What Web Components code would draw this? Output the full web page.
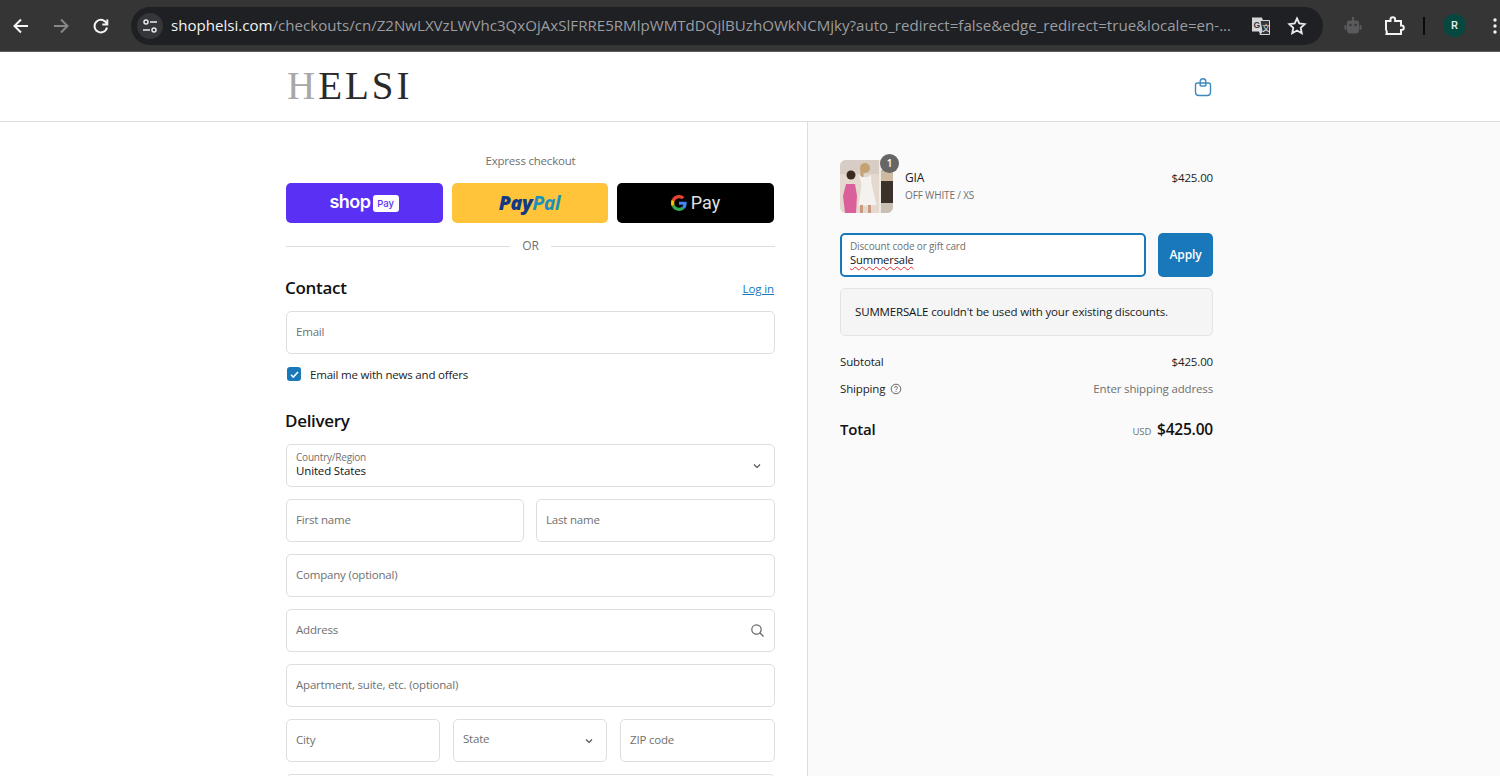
<!DOCTYPE html>
<html><head><meta charset="utf-8">
<style>
html,body{margin:0;height:776px;overflow:hidden;background:#fff;font-family:"Open Sans","Noto Sans","Liberation Sans",sans-serif;}
</style></head><body>
<browser-bar></browser-bar>
<shop-header></shop-header>
<checkout-page>
  <div slot="main" style="display:contents">
    <express-checkout></express-checkout>
    <section-head title="Contact" link="Log in" top="21"></section-head>
    <form-field label="Email"></form-field>
    <check-row>Email me with news and offers</check-row>
    <section-head title="Delivery" top="27"></section-head>
    <div style="display:flex;flex-direction:column;gap:12px">
      <form-field label="Country/Region" value="United States" icon="chevron"></form-field>
      <field-row><form-field label="First name"></form-field><form-field label="Last name"></form-field></field-row>
      <form-field label="Company (optional)"></form-field>
      <form-field label="Address" icon="search"></form-field>
      <form-field label="Apartment, suite, etc. (optional)"></form-field>
      <field-row three><form-field label="City"></form-field><form-field label="State" icon="chevron" small></form-field><form-field label="ZIP code"></form-field></field-row>
      <form-field label=""></form-field>
    </div>
  </div>
  <order-summary slot="side"></order-summary>
</checkout-page>
<script>
function def(name, html){
  customElements.define(name, class extends HTMLElement{
    connectedCallback(){
      if(this.shadowRoot) return;
      const r=this.attachShadow({mode:'open'});
      r.innerHTML = typeof html==='function'?html(this):html;
    }
  });
}
def('browser-bar',`<style>
:host{display:flex;align-items:center;height:51px;background:#353535;border-bottom:1px solid #5c5c5c;box-sizing:content-box;font-family:"Open Sans",sans-serif;overflow:hidden}
.nav{display:flex;align-items:center;gap:20px;padding-left:11px;width:131px;box-sizing:border-box;flex:none}
svg{display:block;flex:none}
.pill{flex:none;width:1192px;height:38px;background:#1f2023;border-radius:19px;display:flex;align-items:center;box-sizing:border-box;padding-left:6px}
.tune{width:26px;height:26px;border-radius:50%;background:#35363a;display:flex;align-items:center;justify-content:center;flex:none}
.url{margin-left:8px;width:1062px;flex:none;font-size:15.100px;line-height:22px;padding-bottom:2px;color:#9b9da1;white-space:nowrap;overflow:hidden}
.url b{font-weight:400;color:#f1f3f4}
.right{display:flex;align-items:center;flex:1}
</style>
<div class="nav">
<svg width="20" height="20" viewBox="0 0 20 20" fill="none" stroke="#f1f3f4" stroke-width="2"><path d="M17 10H4M10 3.5 3.500 10l6.500 6.500"/></svg>
<svg width="20" height="20" viewBox="0 0 20 20" fill="none" stroke="#85878a" stroke-width="2"><path d="M3 10h13M10 3.500l6.500 6.500-6.500 6.500"/></svg>
<svg width="20" height="20" viewBox="0 0 20 20" fill="none" stroke="#f1f3f4" stroke-width="2"><path d="M15.800 8A6.300 6.300 0 1 0 16 11.500"/><path d="M16.300 3.500v5h-5" /></svg>
</div>
<div class="pill">
<div class="tune"><svg width="18" height="18" viewBox="0 0 18 18" fill="none" stroke="#e8eaed" stroke-width="1.500"><circle cx="5" cy="5" r="2"/><path d="M9 5h7M2 13h7"/><circle cx="13" cy="13" r="2"/></svg></div>
<div class="url"><b>shophelsi.com</b>/checkouts/cn/Z2NwLXVzLWVhc3QxOjAxSlFRRE5RMlpWMTdDQjlBUzhOWkNCMjky?auto_redirect=false&amp;edge_redirect=true&amp;locale=en-...</div>
<svg style="margin-left:18px" width="20" height="20" viewBox="0 0 20 20"><path d="M1 1.500h10l1 3h6.500v14H9l-1-3H1z" fill="#d4d5d7"/><path d="M9 4.500h9.500v14H9l2-3z" fill="#35363a" stroke="#d4d5d7"/><text x="2.500" y="11.500" font-size="8.500" font-weight="700" font-family="Liberation Sans" fill="#35363a">G</text><text x="11" y="15" font-size="8" font-family="Noto Sans CJK SC" fill="#e8eaed">文</text></svg>
<svg style="margin-left:16px" width="20" height="20" viewBox="0 0 20 20" fill="none" stroke="#e8eaed" stroke-width="1.800"><path d="m10 2.500 2.300 5 5.400.6-4 3.700 1.100 5.400L10 14.500l-4.800 2.700 1.100-5.400-4-3.700 5.400-.6z"/></svg>
</div>
<div class="right">
<svg style="margin-left:19px" width="22" height="22" viewBox="0 0 22 22" fill="#5a5a5c"><rect x="10" y="2" width="2" height="4"/><path d="M5 7.500q0-2 2-2h8q2 0 2 2v8q0 3-3 3H8q-3 0-3-3z"/><rect x="2.500" y="10" width="2" height="5" rx="1"/><rect x="17.500" y="10" width="2" height="5" rx="1"/><circle cx="8.500" cy="10" r="1.200" fill="#353535"/><circle cx="13.500" cy="10" r="1.200" fill="#353535"/></svg>
<svg style="margin-left:19px" width="22" height="22" viewBox="0 0 22 22" fill="none" stroke="#f1f3f4" stroke-width="2"><path d="M3 6h4.500V4.500a2.300 2.300 0 0 1 4.600 0V6H18v4.500h.5a2.300 2.300 0 0 1 0 4.600H18V19H3.500q.8-2.500-.5-4.500z"/></svg>
<div style="width:2px;height:18px;background:#0a0a0a;margin-left:18px;flex:none"></div>
<div style="margin-left:18px;width:23px;height:23px;border-radius:50%;background:#06483f;color:#e8f0ee;font:500 11px/23px Roboto,sans-serif;text-align:center;flex:none">R</div>
<svg style="margin-left:26px" width="6" height="18" viewBox="0 0 6 18" fill="#f1f3f4"><circle cx="3" cy="3" r="1.700"/><circle cx="3" cy="9" r="1.700"/><circle cx="3" cy="15" r="1.700"/></svg>
</div>`);
def('shop-header',`<style>
:host{display:block;background:#fff;border-bottom:1px solid #dedede;box-sizing:border-box;height:70px}
.in{width:927px;margin-left:286px;height:69px;display:flex;align-items:center;justify-content:space-between}
.logo{font:400 39px/1 "Liberation Serif",serif;letter-spacing:3px;color:#2a2a2a;margin:-2px 0 0 1px}
.logo span{color:#a8a8a8}
svg{display:block}
</style><div class="in"><div class="logo"><span>H</span>ELSI</div>
<svg width="20" height="20" viewBox="0 0 20 20" fill="none" stroke="#3f88bd" stroke-width="1.400"><path d="M4.500 6h11q2 0 2 2v7q0 3.500-3.500 3.500H6Q2.500 18.500 2.500 15V8q0-2 2-2z"/><path d="M7.200 8.500V4.500a2.800 2.800 0 0 1 5.600 0v4q-2.800 1.200-5.600 0z"/></svg></div>`);
def('checkout-page',`<style>
:host{display:grid;grid-template-columns:807px 1fr;height:654px;overflow:hidden}
.main{padding:31px 32px 0 286px;box-sizing:border-box;background:#fff;min-width:0}
.side{background:#fafafa;border-left:1px solid #dedede;padding:38px 0 0 32px;box-sizing:border-box}
</style><div class="main"><slot name="main"></slot></div><div class="side"><slot name="side"></slot></div>`);
def('express-checkout',`<style>
:host{display:block;font-size:11.500px;color:#707070}
.t{text-align:center;line-height:16px;margin-bottom:14px;letter-spacing:-.2px}
.b{display:grid;grid-template-columns:157px 156px 157px;column-gap:9px;margin-right:1px}
.pay{height:40px;border-radius:5px;display:flex;align-items:center;justify-content:center}
.shop{background:#5a31f4;color:#fff;gap:2px}
.shop i{font:600 18px/1 "Inter",sans-serif;letter-spacing:-.5px;margin:-2px 0 0 -1px}
.shop em{font:500 9.500px/17px "Inter",sans-serif;background:#fff;color:#5a31f4;border-radius:3px;width:26px;text-align:center;height:17px;display:block}
.pp{background:#ffc439;font:italic 700 19.500px/1 "Open Sans",sans-serif;letter-spacing:-.4px;padding-right:1px}
.pp b{color:#123984}.pp u{text-decoration:none;color:#1b90bf}
.g{background:#000;color:#e0e0e0;font:400 18px/1 "Roboto",sans-serif;gap:4px}
.or{display:flex;align-items:center;gap:12px;margin-top:14px;height:18px;font-size:12px;color:#707070}
.or:before,.or:after{content:"";flex:1;height:1px;background:#dedede}
.or span{line-height:18px}
svg{display:block}
</style>
<div class="t">Express checkout</div>
<div class="b">
<div class="pay shop"><i>shop</i><em>Pay</em></div>
<div class="pay pp"><b>Pay</b><u>Pal</u></div>
<div class="pay g"><svg width="16" height="16" viewBox="0 0 48 48"><path fill="#ea4335" d="M24 9.500c3.500 0 6.700 1.200 9.200 3.600l6.800-6.800C35.900 2.400 30.500 0 24 0 14.600 0 6.500 5.400 2.600 13.200l8 6.200C12.400 13.700 17.700 9.500 24 9.500z"/><path fill="#4285f4" d="M47 24.500c0-1.600-.1-3.100-.4-4.500H24v9h13c-.6 3-2.300 5.500-4.800 7.200l7.700 6C44.400 38 47 31.800 47 24.500z"/><path fill="#fbbc05" d="M10.500 28.600a14.500 14.500 0 0 1 0-9.200l-8-6.200a24 24 0 0 0 0 21.600z"/><path fill="#34a853" d="M24 48c6.500 0 11.900-2.100 15.900-5.800l-7.700-6c-2.200 1.500-4.900 2.300-8.200 2.300-6.300 0-11.600-4.200-13.500-9.900l-8 6.200C6.500 42.600 14.600 48 24 48z"/></svg><span>Pay</span></div>
</div>
<div class="or"><span>OR</span></div>`);
def('section-head',h=>`<style>
:host{display:flex;align-items:center;justify-content:space-between;margin-top:${h.getAttribute('top')||0}px;margin-bottom:11px;height:24px}
h2{margin:0 0 0 -1px;font:600 17px/24px "Open Sans",sans-serif;color:#111;letter-spacing:-.3px}
a{font-size:11.500px;color:#1878b9;text-decoration:underline;margin:1px 1px 0 0;letter-spacing:-.1px}
</style><h2>${h.getAttribute('title')}</h2>${h.getAttribute('link')?`<a>${h.getAttribute('link')}</a>`:''}`);
def('form-field',h=>{
 const v=h.getAttribute('value'),ic=h.getAttribute('icon'),sm=h.hasAttribute('small');
 const icon=ic==='chevron'?`<svg style="margin-top:${sm?5:3}px" width="12" height="12" viewBox="0 0 12 12" fill="none" stroke="#555" stroke-width="1.200"><path d="m3 4.500 3 3 3-3"/></svg>`:ic==='search'?`<svg style="margin:3px -2px 0 0" width="15" height="15" viewBox="0 0 15 15" fill="none" stroke="#666" stroke-width="1.200"><circle cx="6.500" cy="6.500" r="4.700"/><path d="m10 10 3.500 3.500"/></svg>`:'';
 return `<style>
:host{height:43px;border:1px solid #dedede;border-radius:5px;background:#fff;box-sizing:border-box;padding:0 11px ${sm?5:3}px 9px;display:flex;align-items:center;justify-content:space-between;font-size:11.500px;letter-spacing:-.2px;color:#707070;min-width:0}
.s{font-size:10px;line-height:14px}
.v{color:#111;font-size:11.500px;line-height:14px;letter-spacing:-.15px}
svg{display:block;flex:none}
</style><div>${v?`<div class="s">${h.getAttribute('label')}</div><div class="v">${v}</div>`:`<div>${h.getAttribute('label')}</div>`}</div>${icon}`;});
def('field-row',h=>`<style>:host{display:grid;grid-template-columns:${h.hasAttribute('three')?'154px 154px 155px':'238px 239px'};column-gap:${h.hasAttribute('three')?'13px':'12px'}}</style><slot></slot>`);
def('check-row',`<style>
:host{display:flex;align-items:center;gap:9px;margin:12px 0 0 1px;height:16px;font-size:11.500px;color:#222;letter-spacing:-.2px}
.c{width:14px;height:14px;background:#1878b9;border-radius:3px;display:flex;align-items:center;justify-content:center}
svg{display:block}
</style><div class="c"><svg width="11" height="11" viewBox="0 0 11 11" fill="none" stroke="#fff" stroke-width="1.500"><path d="m2 5.800 2.300 2.300L9 3"/></svg></div><div><slot></slot></div>`);
def('order-summary',`<style>
:host{display:block;width:373px;font-size:11.500px;color:#222;letter-spacing:-.15px}
.item{display:flex;height:54px}
.th{position:relative;width:53px;height:53px;flex:none;border-radius:6px;background:#e9dfd8}
.th svg{display:block;border-radius:6px;filter:blur(.4px)}
.badge{position:absolute;top:-6px;right:-6px;width:19px;height:19px;border-radius:50%;background:#666;color:#fff;font:600 10px/19px "Open Sans",sans-serif;text-align:center}
.nm{margin-left:12px;flex:1;padding-top:10px}
.nm div{line-height:16px;font-size:12px}
.nm small{display:block;font-size:10px;line-height:14px;color:#707070;margin-top:2px}
.pr{padding-top:10px;line-height:16px;font-size:11.500px}
.disc{display:flex;gap:12px;margin-top:19px;height:44px}
.inp{flex:1;border:2px solid #1878b9;border-radius:5px;background:#fff;box-sizing:border-box;padding:5px 8px}
.inp small{display:block;font-size:10px;line-height:13px;color:#707070}
.inp span{display:block;font-size:11.200px;line-height:14px;color:#111;text-decoration:underline wavy #e0342c 1px;text-underline-offset:2px}
.apply{width:55px;flex:none;background:#1878b9;border-radius:5px;color:#fff;font-weight:600;font-size:12px;display:flex;align-items:center;justify-content:center;box-sizing:border-box;padding-bottom:2px}
.msg{margin-top:11px;height:48px;border:1px solid #e3e3e3;border-radius:5px;background:#f5f5f5;box-sizing:border-box;padding:0 14px 2px;display:flex;align-items:center}
.msg b{font-weight:500;color:#111}
.row{display:flex;justify-content:space-between;align-items:center;line-height:16px}
.mut{color:#707070}
.q{display:inline-block;vertical-align:-2px;margin-left:2px}
.tot{display:flex;justify-content:space-between;align-items:baseline;margin-top:21px;line-height:22px}
.tot b{font-size:15.500px;font-weight:600;color:#111;letter-spacing:-.2px}
.tot>b{font-size:15px}
.tot small{font-size:9.500px;color:#707070;margin-right:3px}
</style>
<div class="item">
<div class="th"><svg width="53" height="53" viewBox="0 0 53 53"><rect width="53" height="53" fill="#e4d8cf"/><rect x="0" y="0" width="53" height="14" fill="#d8cdc4"/><rect x="39" y="0" width="14" height="53" fill="#f0ebe5"/><rect x="41" y="10" width="12" height="12" fill="#cdbaa0"/><rect x="41" y="21" width="12" height="22" fill="#3a3228"/><rect x="41" y="43" width="12" height="10" fill="#c9bfb3"/><circle cx="11" cy="15" r="4.500" fill="#3a2a20"/><path d="M6 24h9l2 12-1 17H5L3 36z" fill="#d9609a"/><circle cx="25" cy="8" r="5" fill="#c4a273"/><rect x="20.500" y="9" width="3" height="9" fill="#c4a273"/><path d="M19 15l3 2h6l3-2 .5 9 5 21-18 1 3-22z" fill="#f4f2ee"/><rect x="20" y="45" width="3" height="8" fill="#c99a80"/><rect x="28" y="45" width="3" height="8" fill="#c99a80"/></svg><div class="badge">1</div></div>
<div class="nm"><div>GIA</div><small>OFF WHITE / XS</small></div>
<div class="pr">$425.00</div>
</div>
<div class="disc"><div class="inp"><small>Discount code or gift card</small><span>Summersale</span></div><div class="apply">Apply</div></div>
<div class="msg"><span><b>SUMMERSALE</b> couldn't be used with your existing discounts.</span></div>
<div class="row" style="margin-top:18px"><span>Subtotal</span><span>$425.00</span></div>
<div class="row" style="margin-top:11px"><span>Shipping <svg class="q" width="12" height="12" viewBox="0 0 12 12" fill="none" stroke="#666"><circle cx="6" cy="6" r="4.800"/><path d="M4.600 4.800a1.400 1.400 0 1 1 2 1.300c-.4.200-.6.500-.6 1"/><path d="M6 8.200v.8"/></svg></span><span class="mut">Enter shipping address</span></div>
<div class="tot"><b>Total</b><span><small>USD</small> <b>$425.00</b></span></div>`);
</script>
</body></html>
